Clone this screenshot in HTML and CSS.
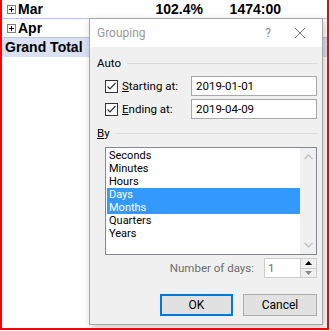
FILE: index.html
```html
<!DOCTYPE html>
<html lang="en">
<head>
  <meta charset="UTF-8" />
  <title>Grouping</title>
  <link rel="stylesheet" href="styles.css">
</head>
<body>

<div class="sheet">
  <!-- Сводная таблица -->
  <div class="pivot">
    <div class="row">
      <div class="label"><span class="expand"></span>Mar</div>
      <div class="num">102.4%</div>
      <div class="num">1474:00</div>
    </div>
    <div class="row">
      <div class="label"><span class="expand"></span>Apr</div>
      <div class="num"></div>
      <div class="num"></div>
    </div>
    <div class="row total">
      <div class="label">Grand Total</div>
      <div class="num"></div>
      <div class="num"></div>
    </div>
  </div>

  <!-- Диалог группировки -->
  <div class="dialog">
    <div class="dialog-title">
      <span class="title-text">Grouping</span>
      <span class="help">?</span>
      <svg class="close" width="12" height="12" viewBox="0 0 12 12">
        <path d="M1 1 L11 11 M11 1 L1 11" stroke="#7a7a7a" stroke-width="1" fill="none"/>
      </svg>
    </div>

    <div class="dialog-body">
      <div class="group-head"><span>Auto</span></div>

      <div class="auto-row">
        <span class="check">
          <svg width="11" height="11" viewBox="0 0 11 11">
            <path d="M1.5 5.5 L4 8 L9.5 2" stroke="#333" stroke-width="1.2" fill="none"/>
          </svg>
        </span>
        <span class="auto-label"><u>S</u>tarting at:</span>
        <div class="field">2019-01-01</div>
      </div>

      <div class="auto-row">
        <span class="check">
          <svg width="11" height="11" viewBox="0 0 11 11">
            <path d="M1.5 5.5 L4 8 L9.5 2" stroke="#333" stroke-width="1.2" fill="none"/>
          </svg>
        </span>
        <span class="auto-label"><u>E</u>nding at:</span>
        <div class="field">2019-04-09</div>
      </div>

      <div class="group-head"><span><u>B</u>y</span></div>

      <div class="listbox">
        <div class="items">
          <div class="item">Seconds</div>
          <div class="item">Minutes</div>
          <div class="item">Hours</div>
          <div class="item selected">Days</div>
          <div class="item selected">Months</div>
          <div class="item">Quarters</div>
          <div class="item">Years</div>
        </div>
        <div class="scrollbar">
          <svg width="9" height="6" viewBox="0 0 9 6"><path d="M0.5 5 L4.5 1 L8.5 5" stroke="#c2c2c2" stroke-width="1.4" fill="none"/></svg>
          <svg width="9" height="6" viewBox="0 0 9 6"><path d="M0.5 1 L4.5 5 L8.5 1" stroke="#c2c2c2" stroke-width="1.4" fill="none"/></svg>
        </div>
      </div>

      <div class="days-row">
        <span class="days-label">Number of days:</span>
        <div class="spinner">
          <span class="spin-value">1</span>
          <div class="spin-btns">
            <div class="spin-btn"><svg width="7" height="4" viewBox="0 0 7 4"><path d="M0 4 L3.5 0 L7 4 Z" fill="#000"/></svg></div>
            <div class="spin-btn"><svg width="7" height="4" viewBox="0 0 7 4"><path d="M0 0 L3.5 4 L7 0 Z" fill="#8a8a8a"/></svg></div>
          </div>
        </div>
      </div>

      <div class="buttons">
        <button class="btn default">OK</button>
        <button class="btn">Cancel</button>
      </div>
    </div>
  </div>
</div>

</body>
</html>
```

FILE: styles.css
```css
* {
  box-sizing: border-box;
}

body {
  margin: 0;
  background: white;
}

.sheet {
  position: relative;
  width: 329px;
  height: 330px;
  border: 2px solid #ff0000;
  border-top: none;
  overflow: hidden;
  font-family: "Liberation Sans", Arial, sans-serif;
}

/* Сводная таблица */
.row {
  display: grid;
  grid-template-columns: 120px 85px 78px 1fr;
  height: 19px;
  border-bottom: 1px solid #b4c6e7;
  font-size: 14px;
  font-weight: bold;
  line-height: 19px;
  color: #000;
}

.row.total {
  background: #d9e1f2;
  border-bottom: none;
}

.label {
  display: flex;
  align-items: center;
  padding-left: 3px;
}

.expand {
  width: 9px;
  height: 9px;
  border: 1px solid #7f7f7f;
  margin: 0 2px 0 2px;
  background:
    linear-gradient(#000, #000) center / 5px 1px no-repeat,
    linear-gradient(#000, #000) center / 1px 5px no-repeat,
    #fff;
}

.num {
  text-align: right;
  padding-right: 4px;
}

/* Диалог */
.dialog {
  position: absolute;
  left: 87px;
  top: 18px;
  width: 234px;
  height: 307px;
  background: #f0f0f0;
  border: 1px solid #a6a6a6;
  box-shadow: 2px 3px 8px rgba(0,0,0,0.22);
  font-family: Roboto, "Segoe UI", sans-serif;
  font-size: 11.5px;
  color: #000;
  display: flex;
  flex-direction: column;
}

.dialog-title {
  height: 28px;
  background: white;
  display: flex;
  align-items: center;
  padding-left: 7px;
}

.title-text {
  flex: 1;
  color: #999;
  font-size: 12px;
}

.help {
  color: #8a8a8a;
  font-size: 12px;
  margin-right: 23px;
}

.close {
  margin-right: 16px;
}

.dialog-body {
  padding: 0 5px 0 7px;
  display: flex;
  flex-direction: column;
}

.group-head {
  display: flex;
  align-items: center;
  height: 16px;
  margin-top: 8px;
}

.group-head::after {
  content: "";
  flex: 1;
  height: 1px;
  background: #dcdcdc;
  margin-left: 6px;
}

.group-head + .listbox {
  margin-top: 6px;
}

.auto-row {
  display: flex;
  align-items: center;
  height: 20px;
  margin-top: 3px;
  padding-left: 8px;
}

.group-head + .auto-row {
  margin-top: 5px;
}

.auto-row + .group-head {
  margin-top: 6px;
}

.check {
  width: 13px;
  height: 13px;
  border: 1px solid #333;
  background: white;
  display: flex;
  align-items: center;
  justify-content: center;
}

.auto-label {
  margin-left: 4px;
  flex: 1;
}

.field {
  width: 126px;
  height: 20px;
  border: 1px solid #a8a8a8;
  background: white;
  padding-left: 4px;
  line-height: 18px;
}

.listbox {
  margin-left: 8px;
  height: 108px;
  border: 1px solid #828790;
  background: white;
  display: flex;
  padding: 1px 0 0 1px;
}

.items {
  flex: 1;
}

.item {
  height: 13px;
  font-size: 11px;
  line-height: 13px;
  padding-left: 2px;
}

.item.selected {
  background: #3399ff;
  color: white;
}

.scrollbar {
  width: 16px;
  margin-top: -1px;
  background: #f0f0f0;
  display: flex;
  flex-direction: column;
  justify-content: space-between;
  align-items: center;
  padding: 6px 0 6px;
}

.days-row {
  display: flex;
  justify-content: flex-end;
  align-items: center;
  margin-top: 3px;
  height: 20px;
}

.days-label {
  color: #6d6d6d;
  margin-right: 10px;
}

.spinner {
  width: 53px;
  height: 20px;
  border: 1px solid #cccccc;
  background: white;
  display: flex;
  align-items: center;
}

.spin-value {
  flex: 1;
  color: #6d6d6d;
  padding-left: 3px;
}

.spin-btns {
  width: 16px;
  height: 18px;
  display: flex;
  flex-direction: column;
  border-left: 1px solid #ccc;
}

.spin-btn {
  flex: 1;
  background: #f0f0f0;
  display: flex;
  align-items: center;
  justify-content: center;
}

.spin-btn + .spin-btn {
  border-top: 1px solid #ccc;
}

.buttons {
  display: flex;
  justify-content: flex-end;
  gap: 10px;
  margin-top: 16px;
}

.btn {
  width: 74px;
  height: 22px;
  background: #e1e1e1;
  border: 1px solid #adadad;
  font-family: inherit;
  font-size: 12px;
  color: #000;
  padding: 0;
}

.btn.default {
  width: 73px;
  border: 2px solid #0078d7;
}
```
